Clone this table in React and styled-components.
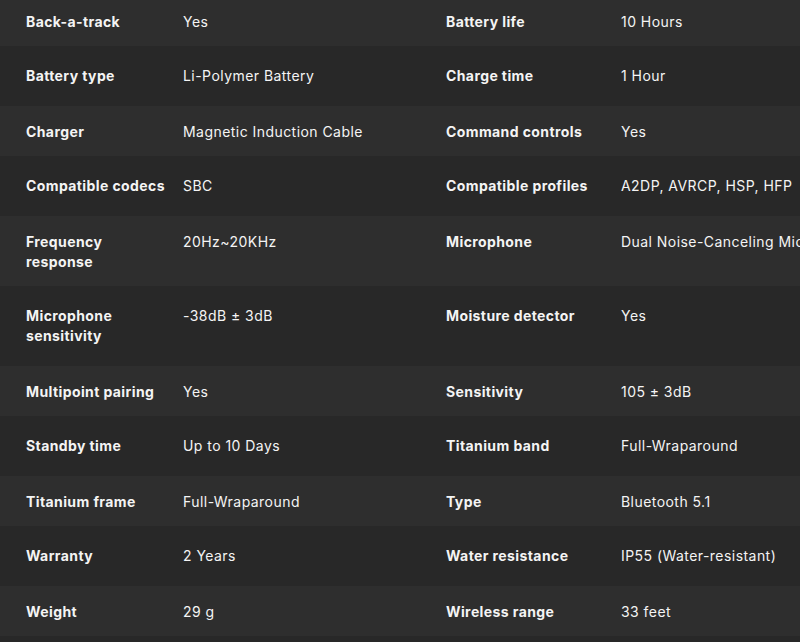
import React from "react";
import styled, { createGlobalStyle } from "styled-components";

const specs = [
  ["Back-a-track", "Yes", "Battery life", "10 Hours"],
  ["Battery type", "Li-Polymer Battery", "Charge time", "1 Hour"],
  ["Charger", "Magnetic Induction Cable", "Command controls", "Yes"],
  ["Compatible codecs", "SBC", "Compatible profiles", "A2DP, AVRCP, HSP, HFP"],
  ["Frequency response", "20Hz~20KHz", "Microphone", "Dual Noise-Canceling Microphones"],
  ["Microphone sensitivity", "-38dB ± 3dB", "Moisture detector", "Yes"],
  ["Multipoint pairing", "Yes", "Sensitivity", "105 ± 3dB"],
  ["Standby time", "Up to 10 Days", "Titanium band", "Full-Wraparound"],
  ["Titanium frame", "Full-Wraparound", "Type", "Bluetooth 5.1"],
  ["Warranty", "2 Years", "Water resistance", "IP55 (Water-resistant)"],
  ["Weight", "29 g", "Wireless range", "33 feet"],
];

function App() {
  return (
    <>
      <GlobalStyle />
      <Wrapper>
        <Table>
          {specs.map((row, i) => (
            <Row key={i} $odd={i % 2 === 0}>
              <Label>{row[0]}</Label>
              <Value>{row[1]}</Value>
              <Label>{row[2]}</Label>
              <Value>{row[3]}</Value>
            </Row>
          ))}
        </Table>
      </Wrapper>
    </>
  );
}

export default App;

const GlobalStyle = createGlobalStyle`
  body {
    margin: 0;
    background: #282828;
    font-family: Inter, "Open Sans", sans-serif;
    overflow: hidden;
  }
`;

const Wrapper = styled.div`
  width: 800px;
  height: 642px;
  overflow: hidden;
`;

const Table = styled.div`
  width: 960px;
  margin-top: -4px;
`;

// ^ lighter rows are a bit shorter than the darker ones
const Row = styled.div`
  display: grid;
  grid-template-columns: 157px 263px 175px 1fr;
  align-items: start;
  padding: ${({ $odd }) => ($odd ? "16px 0 14px 26px" : "20px 0 20px 26px")};
  background: ${({ $odd }) => ($odd ? "#2e2e2e" : "#282828")};
  color: #f4f4f4;
  font-size: 14px;
  line-height: 20px;
  letter-spacing: 0.4px;
`;

const Label = styled.div`
  font-weight: 700;
  padding-right: 15px;
`;

const Value = styled.div`
  font-weight: 400;
  white-space: nowrap;
  letter-spacing: 0.45px;
`;
